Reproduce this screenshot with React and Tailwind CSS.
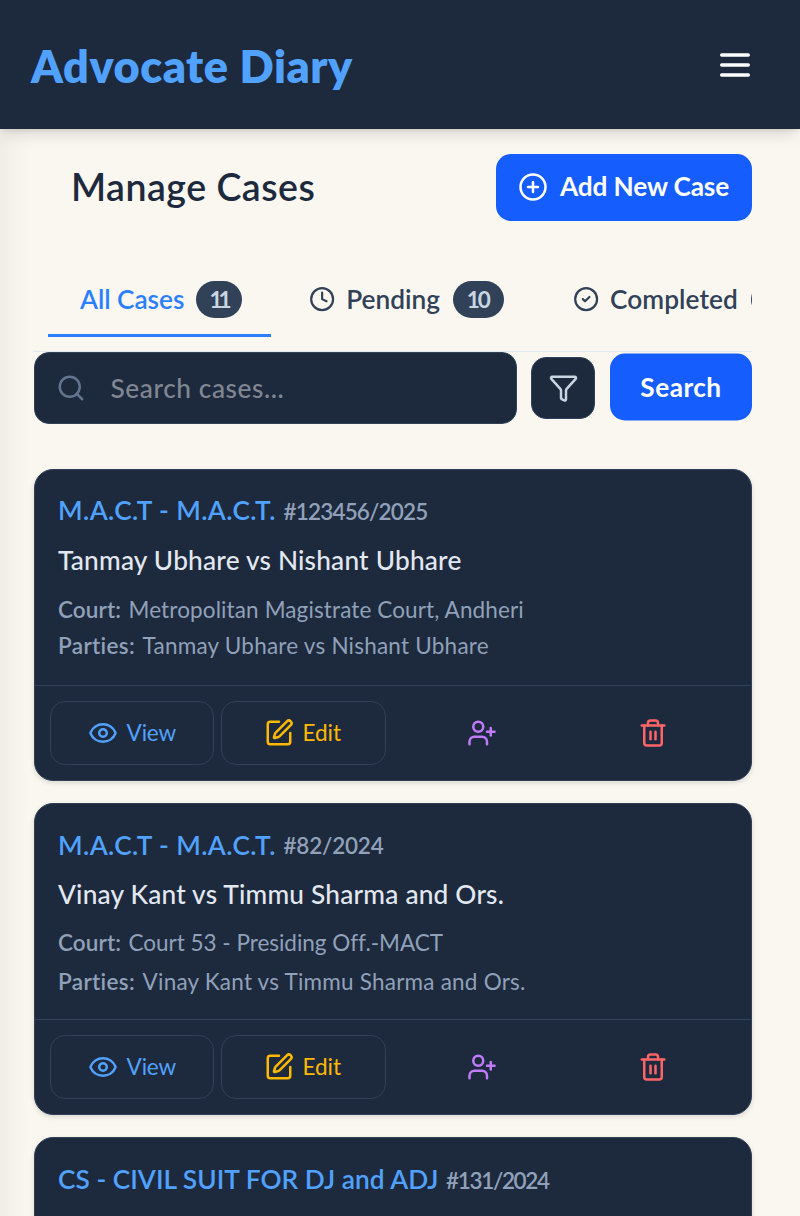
import {
  CircleCheck,
  CirclePlus,
  Clock,
  Eye,
  Funnel,
  Search,
  SquarePen,
  Trash2,
  UserPlus,
} from "lucide-react";

const cases = [
  {
    type: "M.A.C.T - M.A.C.T.",
    typeClass: "tracking-[0.42px]",
    number: "#123456/2025",
    numberClass: "tracking-[-0.82px]",
    title: "Tanmay Ubhare vs Nishant Ubhare",
    court: "Metropolitan Magistrate Court, Andheri",
    courtClass: "mt-[16px] tracking-[0.12px]",
    partiesClass: "mt-[6px]",
  },
  {
    type: "M.A.C.T - M.A.C.T.",
    typeClass: "tracking-[0.42px]",
    number: "#82/2024",
    numberClass: "tracking-[-0.2px]",
    title: "Vinay Kant vs Timmu Sharma and Ors.",
    court: "Court 53 - Presiding Off.-MACT",
    courtClass: "mt-[15px] tracking-[-0.02px]",
    partiesClass: "mt-[9px]",
  },
  {
    type: "CS - CIVIL SUIT FOR DJ and ADJ",
    typeClass: "tracking-[0.03px]",
    number: "#131/2024",
    numberClass: "tracking-[-1.35px]",
  },
];

function Header() {
  return (
    <header className="relative z-20 flex h-[129px] items-center justify-between bg-slate-800 pr-[45px] pl-[31px] shadow-[0_8px_16px_-4px_rgba(0,0,0,0.14),0_2px_5px_-1px_rgba(0,0,0,0.1)]">
      <h1 className="pt-[3px] text-[45px] leading-[52px] font-extrabold tracking-[0.55px] text-blue-400">
        Advocate Diary
      </h1>
      <button type="button" aria-label="Menu" className="text-white">
        <svg className="size-10" viewBox="0 0 24 24" fill="none" stroke="currentColor" strokeWidth="2" strokeLinecap="round">
          <path d="M4 6h16M4 12h16M4 18h16" />
        </svg>
      </button>
    </header>
  );
}

function Badge({ children }) {
  return (
    <span className="flex h-[37px] items-center rounded-full bg-slate-700 px-[15px] text-[22.5px] font-bold text-slate-300">
      {children}
    </span>
  );
}

function Tabs() {
  return (
    <nav className="mt-[43px] flex h-[88px] items-start overflow-hidden border-b border-slate-200 pl-[14px] text-[26.25px] leading-[37px] font-semibold text-slate-700">
      <div className="flex h-[73px] w-[223px] shrink-0 items-start border-b-[3px] border-blue-500 pt-[17px] pl-[32px] text-blue-500">
        <span className="w-[115.5px] tracking-[-0.05px]">All Cases</span>
        <Badge>
          <span className="w-[16px] -translate-x-px tracking-[-4px]">11</span>
        </Badge>
      </div>
      <div className="ml-[38px] flex shrink-0 items-start pt-[17px]">
        <Clock className="mt-[5px] size-[26.25px]" strokeWidth={2} />
        <span className="ml-[11px] w-[106.5px]">Pending</span>
        <Badge>
          <span className="w-[21.5px] -translate-x-px tracking-[-2px]">10</span>
        </Badge>
      </div>
      <div className="ml-[68.5px] flex shrink-0 items-start pt-[17px]">
        <CircleCheck className="mt-[5px] size-[26.25px]" strokeWidth={2} />
        <span className="ml-[11px] w-[140.5px] tracking-[0.08px]">Completed</span>
        <Badge>1</Badge>
      </div>
    </nav>
  );
}

function SearchBar() {
  return (
    <div className="flex h-[72px] items-center">
      <div className="flex h-[72px] w-[483px] items-center rounded-[15px] border-[1.5px] border-slate-700 bg-slate-800 pl-[21px]">
        <Search className="size-[30px] text-slate-500" strokeWidth={2} />
        <span className="ml-[24.5px] translate-y-[0.5px] text-[26.25px] font-medium tracking-[0.58px] text-[#808793]">
          Search cases...
        </span>
      </div>
      <button
        type="button"
        aria-label="Filter"
        className="ml-[14px] flex h-[62px] w-[64px] items-center justify-center rounded-[15px] border-[1.5px] border-slate-700 bg-slate-800 text-slate-300"
      >
        <Funnel className="size-[30px] translate-x-[0.5px]" strokeWidth={2} />
      </button>
      <button
        type="button"
        className="ml-[15px] h-[67px] w-[142px] -translate-y-[0.5px] rounded-[15px] bg-blue-600 text-[26.25px] font-bold tracking-[0.45px] text-white"
      >
        Search
      </button>
    </div>
  );
}

function CaseCard({ item }) {
  return (
    <article className="flex h-[312px] flex-col rounded-[19px] border-[1.5px] border-slate-700 bg-slate-800 shadow-[0_2px_5px_rgba(0,0,0,0.13)]">
      <div className="h-[215px] px-[23px] pt-[22.5px]">
        <div className="flex h-[37px] items-center gap-[7.5px] whitespace-nowrap">
          <h3 className={`text-[26.25px] font-semibold text-blue-400 ${item.typeClass}`}>{item.type}</h3>
          <span className={`translate-y-[0.5px] text-[22.5px] font-semibold text-slate-400 ${item.numberClass}`}>
            {item.number}
          </span>
        </div>
        {item.title && (
          <>
            <p className="mt-[12.5px] h-[37px] text-[26.25px] leading-[37px] font-medium tracking-[0.2px] text-slate-200">
              {item.title}
            </p>
            <p className={`h-[30px] text-[22.5px] leading-[30px] text-slate-400 ${item.courtClass}`}>
              <span className="mr-[7.5px] font-semibold tracking-[0.1px]">Court:</span>
              {item.court}
            </p>
            <p className={`h-[30px] text-[22.5px] leading-[30px] tracking-[0.22px] text-slate-400 ${item.partiesClass}`}>
              <span className="mr-[7.5px] font-semibold tracking-[0.35px]">Parties:</span>
              {item.title}
            </p>
          </>
        )}
      </div>
      <div className="flex gap-[7px] border-t-[1.5px] border-slate-700 pt-[14.5px] pl-[14.5px] text-[22.5px]">
        <button
          type="button"
          className="flex h-[64px] w-[164.5px] items-center justify-center gap-[8px] rounded-[15px] border-[1.5px] border-slate-700 text-blue-400"
        >
          <Eye className="size-[30px]" strokeWidth={2} />
          <span className="translate-x-[0.5px] tracking-[-0.2px]">View</span>
        </button>
        <button
          type="button"
          className="flex h-[64px] w-[164.5px] items-center justify-center gap-[8px] rounded-[15px] border-[1.5px] border-slate-700 pr-px text-amber-400"
        >
          <SquarePen className="size-[30px]" strokeWidth={2} />
          <span>Edit</span>
        </button>
        <button
          type="button"
          aria-label="Assign"
          className="flex h-[64px] w-[164.5px] items-center justify-center pl-[15px] text-purple-400"
        >
          <UserPlus className="size-[30px]" strokeWidth={2} />
        </button>
        <button
          type="button"
          aria-label="Delete"
          className="flex h-[64px] w-[164.5px] items-center justify-center pl-[14px] text-red-400"
        >
          <Trash2 className="size-[30px]" strokeWidth={2} />
        </button>
      </div>
    </article>
  );
}

export default function App() {
  return (
    <div className="relative h-[1216px] w-[800px] overflow-hidden bg-[#faf7f0] font-['Lato',sans-serif]">
      <Header />
      <div className="pointer-events-none absolute top-0 left-0 z-10 h-full w-[28px] bg-linear-to-r from-black/4 to-transparent" />
      <main className="pt-[24.5px] pr-[48px] pl-[34px]">
        <div className="flex items-center justify-between pl-[37px]">
          <h2 className="text-[37.5px] font-semibold tracking-[0.5px] text-slate-800">Manage Cases</h2>
          <button
            type="button"
            className="flex h-[67px] w-[256px] items-center rounded-[15px] bg-blue-600 pl-[22px] text-[26.25px] font-bold text-white"
          >
            <CirclePlus className="size-[30px]" strokeWidth={2} />
            <span className="ml-[12px] -translate-y-[0.5px] tracking-[-0.15px]">Add New Case</span>
          </button>
        </div>
        <Tabs />
        <SearchBar />
        <section className="mt-[45.5px] flex flex-col gap-[22.2px]">
          {cases.map((item) => (
            <CaseCard key={item.number} item={item} />
          ))}
        </section>
      </main>
    </div>
  );
}
